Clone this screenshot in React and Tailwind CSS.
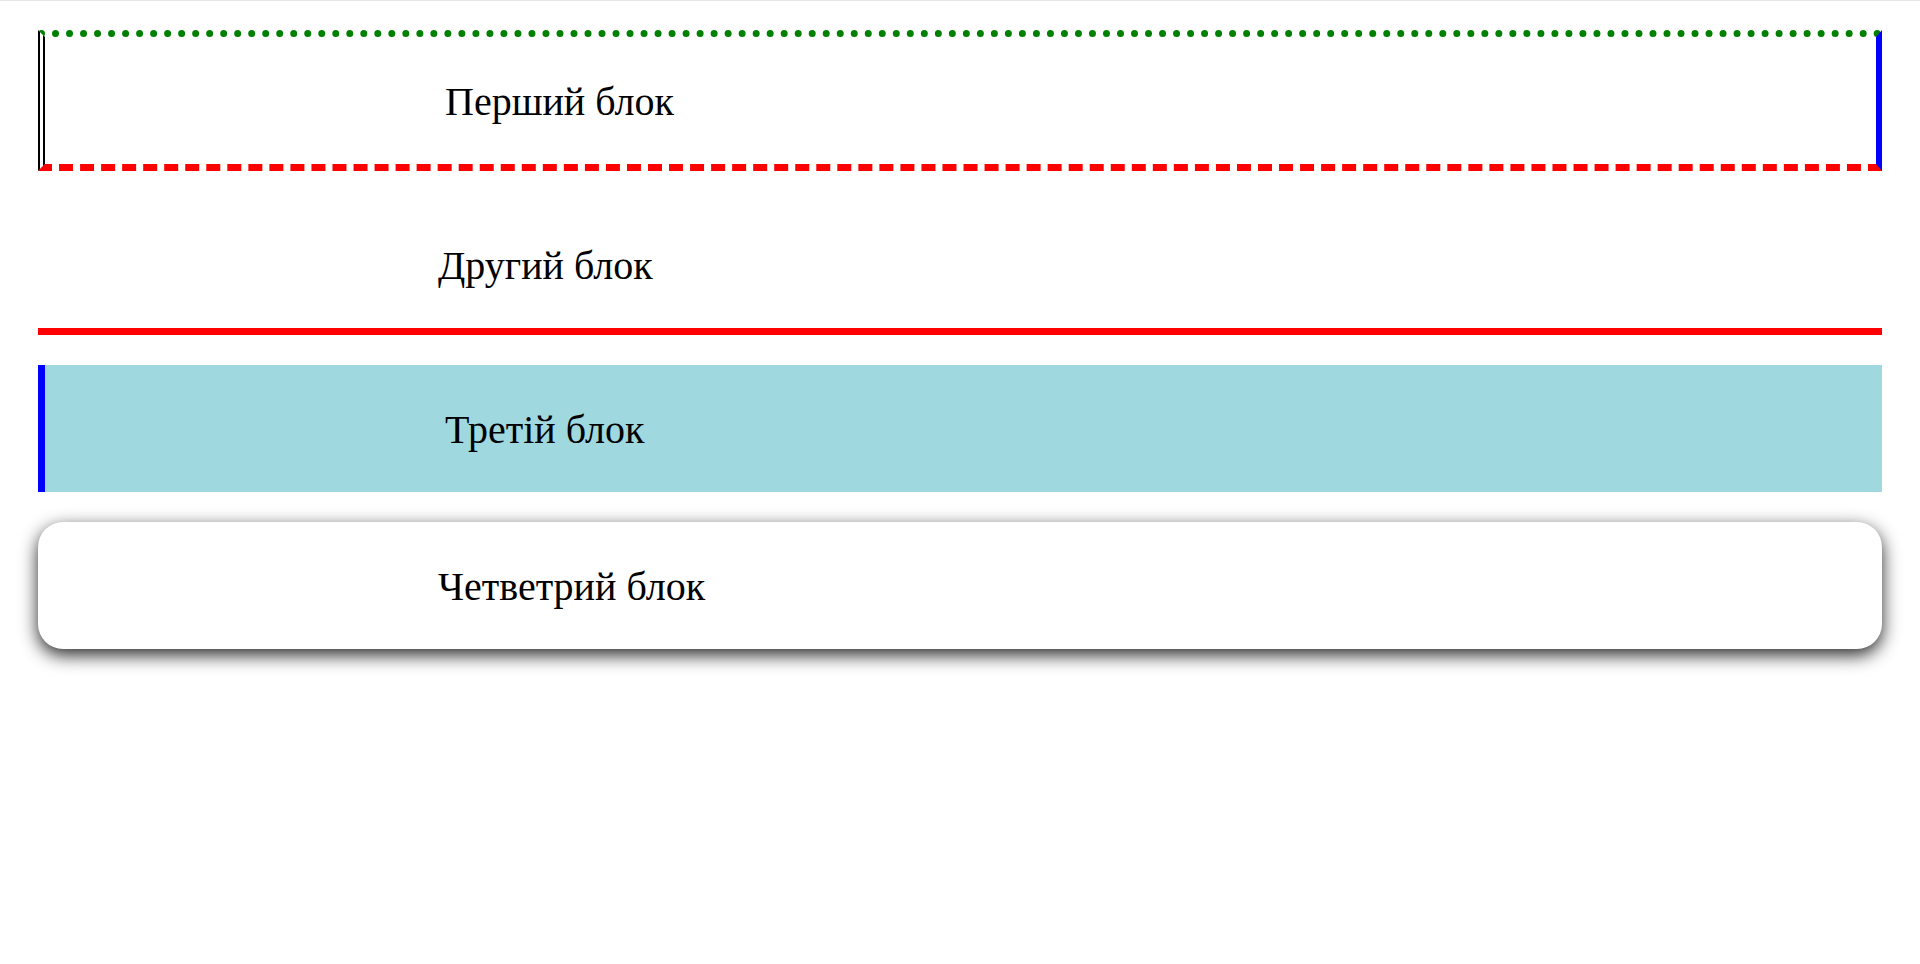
export default function App() {
  const text = 'text-[40px] text-black leading-[1.15]';
  return (
    <div
      className="min-h-[964px] bg-white border-t border-[#e6e6e6] px-[38px] pt-[29px] flex flex-col gap-[30px]"
      style={{ fontFamily: '"Liberation Serif", "Times New Roman", serif' }}
    >
      <div className="h-[141px] flex items-center pl-[400px] pt-[3px] border-t-[7px] border-t-[#008000] [border-top-style:dotted] border-b-[7px] border-b-[#ff0000] [border-bottom-style:dashed] border-l-[7px] border-l-black [border-left-style:double] border-r-[6px] border-r-[#0000ff] [border-right-style:solid]">
        <span className={text}>Перший блок</span>
      </div>

      <div className="h-[134px] flex items-center pl-[400px] pt-[3px] border-b-[7px] border-[#ff0000] border-solid">
        <span className={text}>Другий блок</span>
      </div>

      <div className="h-[127px] flex items-center pl-[400px] pt-[3px] bg-[#a0d8e0] border-l-[7px] border-[#0000ff] border-solid">
        <span className={text}>Третій блок</span>
      </div>

      <div className="h-[127px] flex items-center pl-[400px] pt-[3px] bg-white rounded-[25px] shadow-[0_6px_18px_rgba(0,0,0,0.85)]">
        <span className={text}>Четветрий блок</span>
      </div>
    </div>
  );
}
